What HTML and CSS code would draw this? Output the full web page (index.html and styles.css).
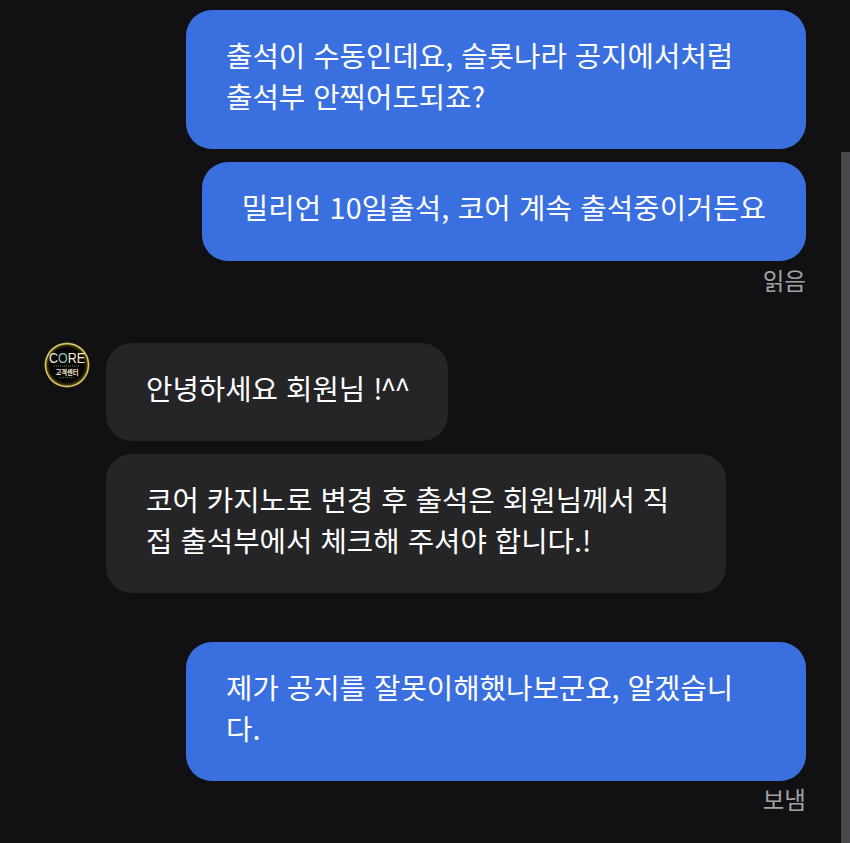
FILE: index.html
```html
<!DOCTYPE html>
<html lang="ko">
<head>
    <meta charset="UTF-8">
    <meta name="viewport" content="width=device-width, initial-scale=1.0">
    <title>대화</title>
    <link rel="stylesheet" href="styles.css">
</head>
<body>
    <div class="chat">
        <div class="bubble mine wide">출석이 수동인데요, 슬롯나라 공지에서처럼<br>출석부 안찍어도되죠?</div>
        <div class="bubble mine spaced">밀리언 10일출석, 코어 계속 출석중이거든요</div>
        <div class="status">읽음</div>

        <div class="incoming">
            <svg class="avatar" viewBox="0 0 46 46" aria-hidden="true">
                <defs>
                    <radialGradient id="glow" cx="50%" cy="50%" r="50%">
                        <stop offset="0%" stop-color="#040302"/>
                        <stop offset="78%" stop-color="#0a0803"/>
                        <stop offset="91%" stop-color="#4f4210"/>
                        <stop offset="100%" stop-color="#b5a03e"/>
                    </radialGradient>
                </defs>
                <circle cx="23" cy="23" r="22.5" fill="url(#glow)"/>
                <circle cx="23" cy="23" r="21.4" fill="none" stroke="#e0cf74" stroke-width="1.2"/>
                <text class="logo-core" x="23" y="20.8" text-anchor="middle" textLength="36" lengthAdjust="spacingAndGlyphs"><tspan class="logo-c">C</tspan><tspan class="logo-o">O</tspan><tspan class="logo-c">RE</tspan></text>
                <line x1="10" y1="24" x2="36" y2="24" stroke="#a89a63" stroke-width="0.8" stroke-dasharray="1 1"/>
                <text class="logo-sub" x="23" y="32.5" text-anchor="middle" textLength="23" lengthAdjust="spacingAndGlyphs">고객센터</text>
                <line x1="15" y1="35.5" x2="31" y2="35.5" stroke="#8d8052" stroke-width="0.7" stroke-dasharray="1 1"/>
            </svg>
            <div class="stack">
                <div class="bubble theirs">안녕하세요 회원님 <span class="marks">!^^</span></div>
                <div class="bubble theirs wide">코어 카지노로 변경 후 출석은 회원님께서 직<br>접 출석부에서 체크해 주셔야 합니다.!</div>
            </div>
        </div>

        <div class="bubble mine wide last">제가 공지를 잘못이해했나보군요, 알겠습니<br>다.</div>
        <div class="status">보냄</div>
    </div>
    <div class="scrollbar"></div>
</body>
</html>
```

FILE: styles.css
```css
html, body {
    height: 100%;
}
body {
    margin: 0;
    background-color: #111113;
    font-family: "Noto Sans CJK KR", "Noto Sans", sans-serif;
    color: #fff;
    overflow: hidden;
    position: relative;
}
.chat {
    width: 806px;
    padding-top: 10px;
    display: flex;
    flex-direction: column;
    align-items: flex-end;
}
.bubble {
    box-sizing: border-box;
    padding: 25px 40px 33px;
    border-radius: 26px;
    font-size: 28.7px;
    line-height: 40.5px;
    white-space: nowrap;
}
.wide {
    width: 620px;
}
.spaced {
    letter-spacing: 0.15px;
}
.mine {
    background: #3a6fe0;
    margin-bottom: 13px;
}
.mine.last {
    margin-bottom: 12px;
}
.theirs {
    background: #252527;
}
.marks {
    letter-spacing: -2px;
}
.status {
    font-size: 23.5px;
    line-height: 30px;
    color: #a3a3a5;
    margin-top: -9px;
}
.incoming {
    align-self: flex-start;
    display: flex;
    align-items: flex-start;
    gap: 16px;
    margin: 48px 0 49px 44px;
}
.avatar {
    width: 46px;
    height: 46px;
    flex-shrink: 0;
    margin-top: -1px;
}
.stack {
    display: flex;
    flex-direction: column;
    align-items: flex-start;
    gap: 13px;
}
.logo-core {
    font-family: "Liberation Sans", sans-serif;
    font-size: 14px;
}
.logo-c {
    fill: #f3ecd0;
}
.logo-o {
    fill: #8fc0bd;
}
.logo-sub {
    font-family: "Noto Sans CJK KR", sans-serif;
    font-size: 7px;
    font-weight: 700;
    fill: #f1ecd8;
}
.scrollbar {
    position: absolute;
    top: 152px;
    right: 0;
    bottom: 0;
    width: 9px;
    background: #49494d;
}
```
